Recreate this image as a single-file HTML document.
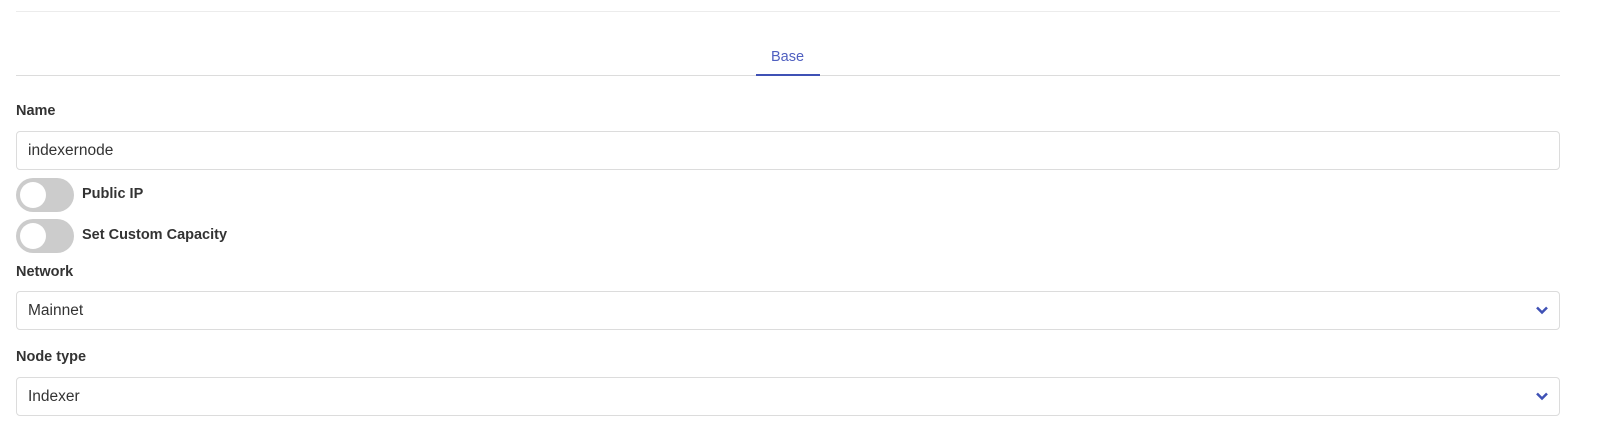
<!DOCTYPE html>
<html><head><style>
body{margin:0;width:1604px;height:446px;background:#fff;font-family:"Liberation Sans",sans-serif;color:#333;position:relative;overflow:hidden}
.a{position:absolute}
.lbl{position:absolute;left:16px;font-weight:bold;font-size:14.5px;color:#333}
.box{position:absolute;left:16px;height:37px;border:1px solid #dcdcdc;border-radius:4px;font-size:15.5px;line-height:37px;padding-left:11px;box-sizing:content-box;width:1531px;color:#333}
.tg{position:absolute;left:16px;width:58px;height:34px;border-radius:17px;background:#cccccc}
.tg::after{content:"";position:absolute;left:4px;top:4px;width:26px;height:26px;border-radius:50%;background:#fff}
.tl{position:absolute;left:82px;font-weight:bold;font-size:14.5px}
.chev{position:absolute;right:10px;top:13px}
</style></head><body>
<div class="a" style="left:16px;top:11px;width:1544px;height:1px;background:#ececec"></div>
<div class="a" style="left:771px;top:49px;font-size:14.5px;color:#4f5fc0">Base</div>
<div class="a" style="left:16px;top:75px;width:1544px;height:1px;background:#dcdcdc"></div>
<div class="a" style="left:756px;top:74px;width:64px;height:2px;background:#3f51b5"></div>
<div class="lbl" style="top:103px">Name</div>
<div class="box" style="top:131px">indexernode</div>
<div class="tg" style="top:178px"></div><div class="tl" style="top:186px">Public IP</div>
<div class="tg" style="top:219px"></div><div class="tl" style="top:227px">Set Custom Capacity</div>
<div class="lbl" style="top:264px">Network</div>
<div class="box" style="top:291px">Mainnet<svg class="chev" width="14" height="10" viewBox="0 0 14 10"><path d="M2 2.5l5 5 5-5" stroke="#3f51b5" stroke-width="2.5" fill="none"/></svg></div>
<div class="lbl" style="top:349px">Node type</div>
<div class="box" style="top:377px">Indexer<svg class="chev" width="14" height="10" viewBox="0 0 14 10"><path d="M2 2.5l5 5 5-5" stroke="#3f51b5" stroke-width="2.5" fill="none"/></svg></div>
</body></html>
